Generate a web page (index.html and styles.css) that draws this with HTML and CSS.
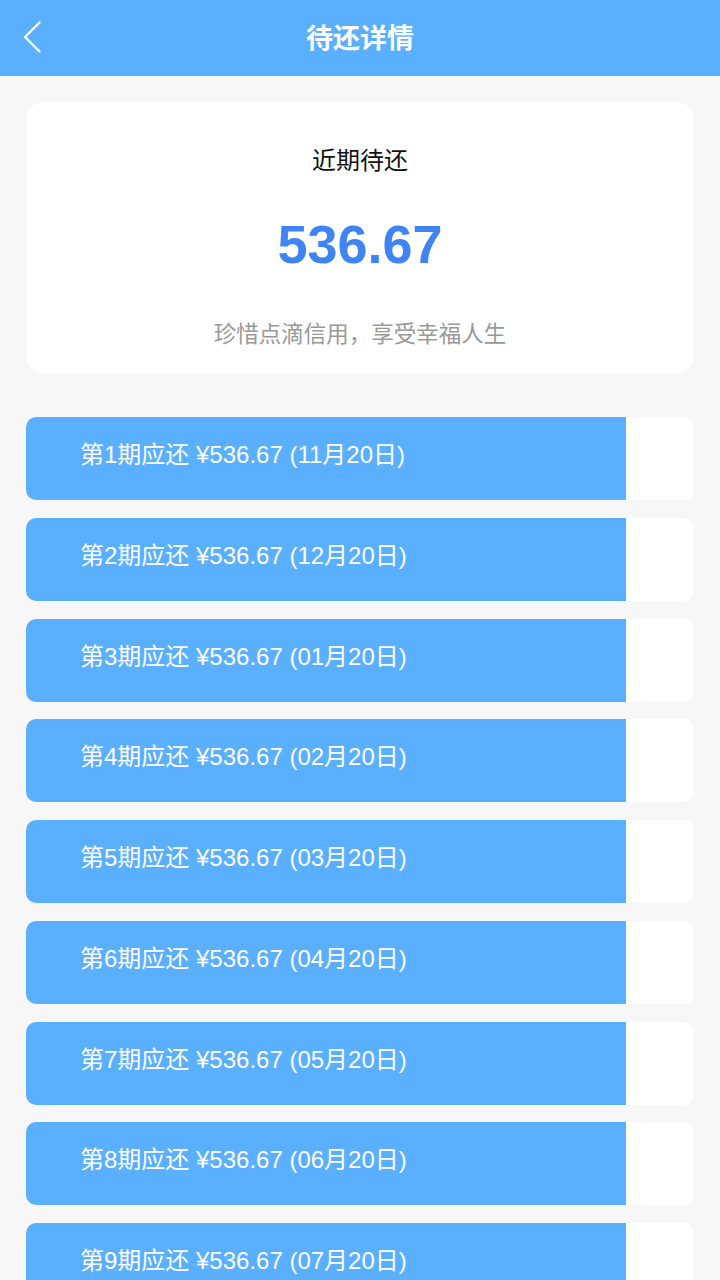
FILE: index.html
```html
<!DOCTYPE html>
<html lang="zh-CN">
<head>
    <meta charset="UTF-8">
    <meta name="viewport" content="width=device-width, initial-scale=1.0">
    <title>待还详情</title>
    <link rel="stylesheet" href="styles.css">
</head>
<body>
    <header class="top-bar">
        <a class="back" href="#">
            <svg width="22" height="34" viewBox="0 0 22 34">
                <path d="M18.5 2.5 L4 17 L18.5 31.5" fill="none" stroke="#fff" stroke-width="2.4" stroke-linecap="round" stroke-linejoin="round"/>
            </svg>
        </a>
        <h1 class="title">待还详情</h1>
        <span></span>
    </header>

    <main class="content">
        <section class="summary">
            <div class="summary-label">近期待还</div>
            <div class="summary-amount">536.67</div>
            <div class="summary-tip">珍惜点滴信用，享受幸福人生</div>
        </section>

        <ul class="plan-list">
            <li class="plan"><span class="plan-text">第1期应还 ¥536.67 (11月20日)</span><span class="plan-side"></span></li>
            <li class="plan"><span class="plan-text">第2期应还 ¥536.67 (12月20日)</span><span class="plan-side"></span></li>
            <li class="plan"><span class="plan-text">第3期应还 ¥536.67 (01月20日)</span><span class="plan-side"></span></li>
            <li class="plan"><span class="plan-text">第4期应还 ¥536.67 (02月20日)</span><span class="plan-side"></span></li>
            <li class="plan"><span class="plan-text">第5期应还 ¥536.67 (03月20日)</span><span class="plan-side"></span></li>
            <li class="plan"><span class="plan-text">第6期应还 ¥536.67 (04月20日)</span><span class="plan-side"></span></li>
            <li class="plan"><span class="plan-text">第7期应还 ¥536.67 (05月20日)</span><span class="plan-side"></span></li>
            <li class="plan"><span class="plan-text">第8期应还 ¥536.67 (06月20日)</span><span class="plan-side"></span></li>
            <li class="plan"><span class="plan-text">第9期应还 ¥536.67 (07月20日)</span><span class="plan-side"></span></li>
        </ul>
    </main>
</body>
</html>
```

FILE: styles.css
```css
body {
    margin: 0;
    background-color: #f7f7f7;
    font-family: "Liberation Sans", "Noto Sans CJK SC", sans-serif;
}

.top-bar {
    display: grid;
    grid-template-columns: 1fr auto 1fr;
    align-items: center;
    height: 76px;
    padding: 0 21px;
    background-color: #5aafff;
}

.back {
    display: flex;
    align-items: center;
    margin-bottom: 3px;
}

.back svg {
    display: block;
}

.title {
    margin: 0 0 3px;
    color: #fff;
    font-size: 27px;
    font-weight: bold;
    line-height: 30px;
    font-family: "Noto Sans CJK SC", sans-serif;
}

.content {
    padding: 26px 26px 0;
}

.summary {
    display: flex;
    flex-direction: column;
    align-items: center;
    background-color: #fff;
    border-radius: 18px;
    padding: 45px 0 29px;
}

.summary-label {
    font-family: "Noto Sans CJK SC", sans-serif;
    font-size: 24px;
    line-height: 24px;
    color: #111;
}

.summary-amount {
    margin-top: 46px;
    font-family: "Liberation Sans", Arial, sans-serif;
    font-weight: bold;
    font-size: 54px;
    line-height: 54px;
    color: #3e84f2;
}

.summary-tip {
    margin-top: 50px;
    font-family: "Noto Sans CJK SC", sans-serif;
    font-size: 22.5px;
    line-height: 23px;
    color: #999;
}

.plan-list {
    list-style: none;
    margin: 44px 0 0;
    padding: 0;
    display: flex;
    flex-direction: column;
    gap: 17.75px;
}

.plan {
    display: flex;
    height: 83px;
    border-radius: 10px;
    overflow: hidden;
    background-color: #fff;
}

.plan-text {
    display: flex;
    align-items: center;
    width: 600px;
    padding: 0 0 12px 54px;
    box-sizing: border-box;
    background-color: #5aafff;
    color: #fff;
    font-size: 24px;
}

.plan-side {
    flex: 1;
}
```
